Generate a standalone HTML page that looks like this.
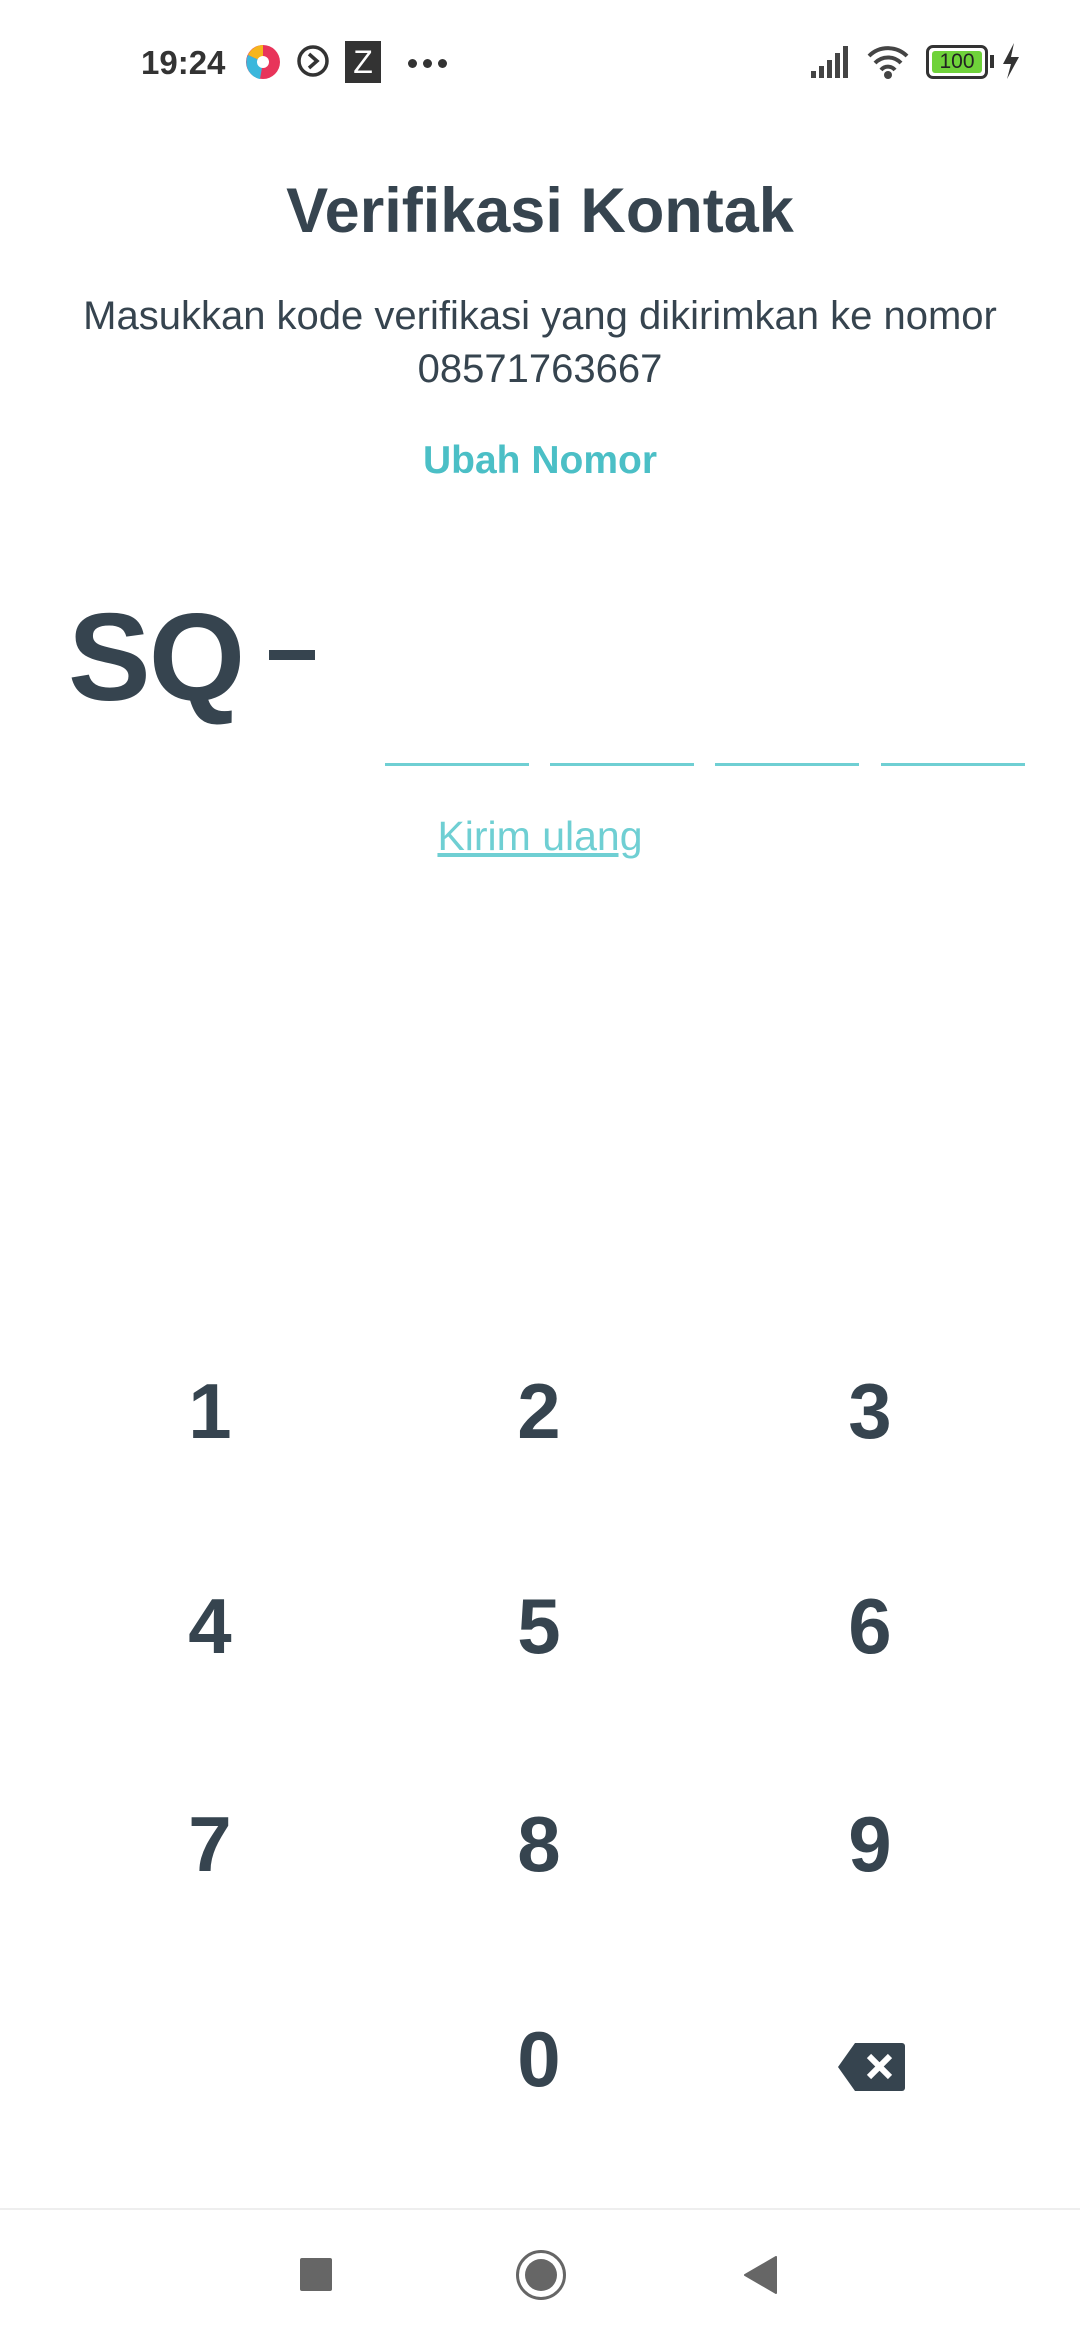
<!DOCTYPE html>
<html><head><meta charset="utf-8"><style>
*{margin:0;padding:0;box-sizing:border-box}
body{width:1080px;height:2340px;background:#fff;position:relative;overflow:hidden;font-family:"Liberation Sans",sans-serif;color:#36444f}
.a{position:absolute}
.c{text-align:center;left:0;width:1080px}
.k{position:absolute;width:200px;margin-left:-100px;text-align:center;font-weight:bold;font-size:78px;line-height:90px;color:#36444f}
.u{position:absolute;top:763px;height:3px;background:#6fcfd3;width:144px}
</style></head><body>
<div class="s a" style="left:0;top:-12px;width:1080px;height:120px">
<div class="a" style="left:141px;top:56px;font-size:33px;font-weight:bold;color:#333">19:24</div>
<svg class="a" style="left:244px;top:51px" width="38" height="46" viewBox="0 0 38 46"><circle cx="19" cy="23" r="17" fill="#e8345a"/><path d="M19 6a17 17 0 0 0-15 10l15 7z" fill="#f5b51c"/><path d="M4 16a17 17 0 0 0 12 24l3-17z" fill="#3bb7dc"/><circle cx="19" cy="23" r="6" fill="#fff"/></svg>
<svg class="a" style="left:296px;top:56px" width="34" height="34" viewBox="0 0 34 34"><circle cx="17" cy="17" r="14" fill="none" stroke="#333" stroke-width="3.5"/><path d="M13 10l8 7-8 7" fill="none" stroke="#333" stroke-width="3.5"/></svg>
<div class="a" style="left:345px;top:53px;width:36px;height:42px;background:#333;color:#fff;font-size:32px;text-align:center;line-height:42px">Z</div>
<div class="a" style="left:408px;top:71px;width:9px;height:9px;border-radius:5px;background:#333;box-shadow:15px 0 #333,30px 0 #333"></div>
<svg class="a" style="left:810px;top:55px" width="44" height="36" viewBox="0 0 44 36"><rect x="1" y="28" width="5" height="7" fill="#444"/><rect x="9" y="23" width="5" height="12" fill="#444"/><rect x="17" y="17" width="5" height="18" fill="#444"/><rect x="25" y="10" width="5" height="25" fill="#444"/><rect x="33" y="3" width="5" height="32" fill="#444"/></svg>
<svg class="a" style="left:866px;top:54px" width="44" height="40" viewBox="0 0 44 40"><path d="M3 14a27 27 0 0 1 38 0M9 21a18 18 0 0 1 26 0M15 28a9 9 0 0 1 14 0" fill="none" stroke="#444" stroke-width="4"/><circle cx="22" cy="33" r="4" fill="#444"/></svg>
<div class="a" style="left:926px;top:57px;width:62px;height:34px;border:3.5px solid #333;border-radius:7px;padding:3px"><div style="background:#6fd23a;height:100%;border-radius:3px;font-size:21px;line-height:22px;text-align:center;color:#222">100</div></div>
<div class="a" style="left:990px;top:67px;width:4px;height:13px;background:#333"></div>
<svg class="a" style="left:1000px;top:53px" width="22" height="40" viewBox="0 0 22 40"><path d="M14 2L3 23h8l-4 15 12-22h-8z" fill="#333"/></svg>
</div>

<div class="a c" style="top:171px;font-size:63px;font-weight:bold;line-height:80px">Verifikasi Kontak</div>
<div class="a c" style="top:290px;font-size:40px;line-height:52px">Masukkan kode verifikasi yang dikirimkan ke nomor</div>
<div class="a c" style="top:343px;font-size:40px;line-height:52px">08571763667</div>
<div class="a c" style="top:435px;font-size:39px;font-weight:bold;color:#4bbfc6;line-height:52px">Ubah Nomor</div>
<div class="a" style="left:68px;top:588px;font-size:124px;font-weight:bold;line-height:140px;letter-spacing:-2px">SQ</div>
<div class="a" style="left:269px;top:650px;width:46px;height:10px;background:#36444f"></div>
<div class="u" style="left:385px"></div><div class="u" style="left:550px"></div><div class="u" style="left:715px"></div><div class="u" style="left:881px"></div>
<div class="a c" style="top:808px;font-size:41px;color:#6fcfd3;text-decoration:underline;line-height:56px">Kirim ulang</div>

<div class="k" style="left:210px;top:1366px">1</div><div class="k" style="left:539px;top:1366px">2</div><div class="k" style="left:870px;top:1366px">3</div>
<div class="k" style="left:210px;top:1581px">4</div><div class="k" style="left:539px;top:1581px">5</div><div class="k" style="left:870px;top:1581px">6</div>
<div class="k" style="left:210px;top:1799px">7</div><div class="k" style="left:539px;top:1799px">8</div><div class="k" style="left:870px;top:1799px">9</div>
<div class="k" style="left:539px;top:2014px">0</div>
<svg class="a" style="left:838px;top:2043px" width="67" height="48" viewBox="0 0 67 48"><path d="M17 0h47a3 3 0 0 1 3 3v42a3 3 0 0 1-3 3H17L0 24z" fill="#36444f"/><path d="M31 13l21 21M52 13L31 34" stroke="#fff" stroke-width="6"/></svg>

<div class="a" style="left:0;top:2208px;width:1080px;height:2px;background:#eee"></div>
<div class="a" style="left:300px;top:2258px;width:32px;height:33px;background:#666;border-radius:2px"></div>
<div class="a" style="left:516px;top:2250px;width:50px;height:50px;border:3px solid #666;border-radius:50%"></div>
<div class="a" style="left:525px;top:2259px;width:32px;height:32px;background:#666;border-radius:50%"></div>
<svg class="a" style="left:744px;top:2256px" width="34" height="38" viewBox="0 0 34 38"><path d="M32 1v36L1 19z" fill="#666" stroke="#666" stroke-linejoin="round" stroke-width="2"/></svg>
</body></html>
